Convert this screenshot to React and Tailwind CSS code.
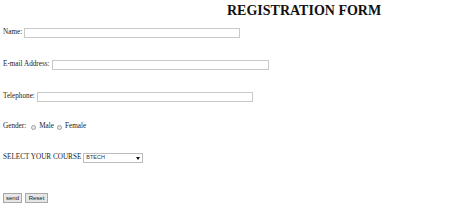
const TextRow = ({ label, inputWidth = 'w-[216px]', className = '' }) => (
    <div className={`flex items-center h-[10px] ${className}`}>
        <span className="text-[7.2px] leading-none text-[#222] whitespace-nowrap">{label}</span>
        <span className={`ml-[2px] h-[10px] ${inputWidth} border border-[#c8c8c8] bg-white`} />
    </div>
);

const Radio = () => (
    <span className="block w-[5px] h-[5px] rounded-full border border-[#a0a0a0] bg-[#e8e8e8]" />
);

export default function App() {
    return (
        <div
            className="w-[474px] h-[205px] bg-white overflow-hidden flex flex-col pl-[3px]"
            style={{ fontFamily: '"Liberation Serif", "Times New Roman", serif' }}
        >
            <div className="h-[18px] pt-[4px] pl-[224px]">
                <h1 className="text-[14px] leading-[14px] font-bold text-[#111] whitespace-nowrap">
                    REGISTRATION FORM
                </h1>
            </div>

            <TextRow label="Name:" className="mt-[10px]" />
            <TextRow label="E-mail Address:" inputWidth="w-[217px]" className="mt-[22px]" />
            <TextRow label="Telephone:" className="mt-[22px]" />

            <div className="flex items-center h-[10px] mt-[20px] text-[7.2px] leading-none text-[#222]">
                <span>Gender:</span>
                <span className="ml-[5px]"><Radio /></span>
                <span className="ml-[3px]">Male</span>
                <span className="ml-[3px]"><Radio /></span>
                <span className="ml-[3px]">Female</span>
            </div>

            <div className="flex items-center h-[10px] mt-[21px]">
                <span className="text-[7.2px] leading-none text-[#222] whitespace-nowrap">SELECT YOUR COURSE</span>
                <span
                    className="ml-[2px] h-[10px] w-[60px] border border-[#bcbcbc] bg-white flex items-center justify-between px-[2px]"
                    style={{ fontFamily: '"Liberation Sans", Arial, sans-serif' }}
                >
                    <span className="text-[5.5px] leading-none text-[#333]">BTECH</span>
                    <span className="w-0 h-0 border-l-[2px] border-r-[2px] border-t-[3px] border-l-transparent border-r-transparent border-t-[#111]" />
                </span>
            </div>

            <div
                className="flex items-center gap-[3px] h-[10px] mt-[30px]"
                style={{ fontFamily: '"Liberation Sans", Arial, sans-serif' }}
            >
                <span className="h-[10px] w-[19px] border border-[#a8a8a8] bg-[#e6e6e6] flex items-center justify-center text-[6px] leading-none text-[#222]">
                    send
                </span>
                <span className="h-[10px] w-[23px] border border-[#a8a8a8] bg-[#e6e6e6] flex items-center justify-center text-[6px] leading-none text-[#222]">
                    Reset
                </span>
            </div>
        </div>
    );
}
